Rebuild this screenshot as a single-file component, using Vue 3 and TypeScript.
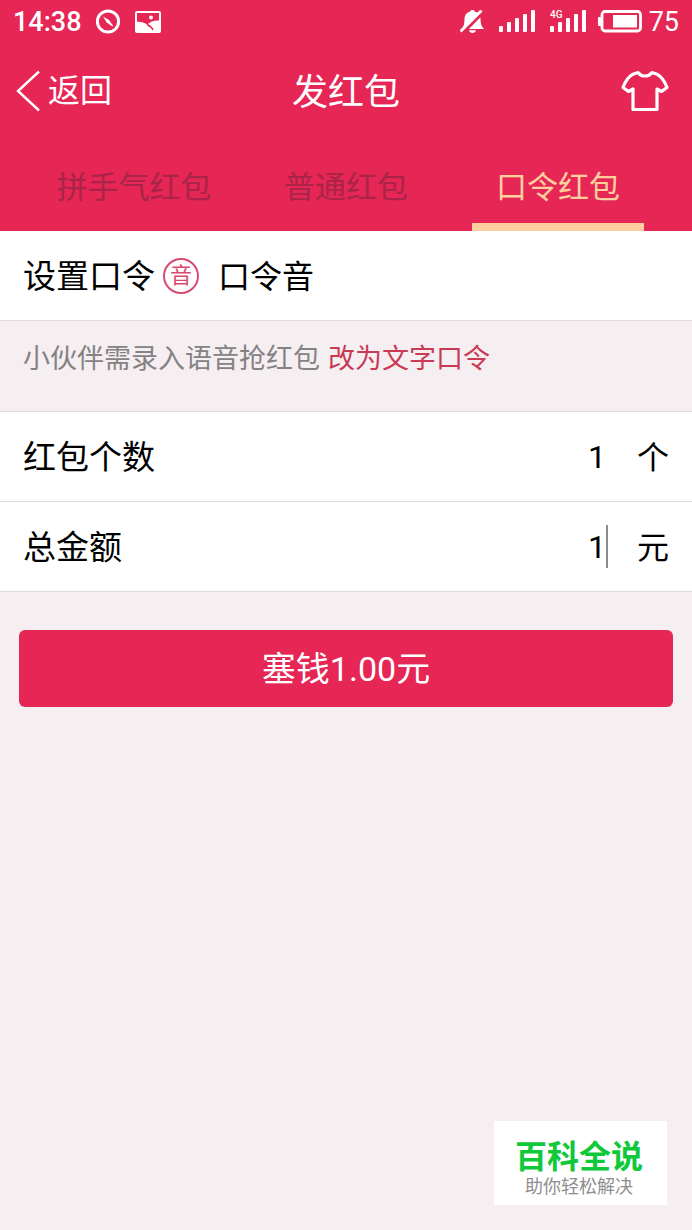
<script setup lang="ts">
import { computed, ref } from 'vue'

interface Tab {
  id: string
  label: string
}

const tabs: Tab[] = [
  { id: 'lucky', label: '拼手气红包' },
  { id: 'normal', label: '普通红包' },
  { id: 'password', label: '口令红包' },
]
const activeTab = ref('password')
const password = ref('口令音')
const count = ref('1')
const amount = ref('1')
const activeField = ref('amount')

const total = computed(() => (Number(amount.value) || 0).toFixed(2))
const signalBars = [6, 10, 14, 18, 22]
</script>

<template>
  <div class="screen">
    <header class="header">
      <div class="status">
        <span class="time">14:38</span>
        <svg class="clock" width="26" height="26" viewBox="0 0 26 26">
          <circle cx="13" cy="12.5" r="10.6" fill="none" stroke="#fff" stroke-width="3" />
          <path d="M8 7.500l6 3.600 4.200 5.700-.8.8-5.700-4z" fill="#fff" />
        </svg>
        <svg class="photo" width="26" height="22" viewBox="0 0 26 22">
          <rect x="1" y="1" width="24" height="20" rx="1" fill="none" stroke="#fff" stroke-width="2" />
          <path d="M1 11c4-.8 7.500 0 11 2.600C15.500 10.500 19 9 25 9.500V21H1z" fill="#fff" />
          <path d="M12 13.500c3 1.500 5 3 6 5.500" fill="none" stroke="#e62655" stroke-width="1.600" />
          <circle cx="16" cy="6.500" r="2" fill="#fff" />
        </svg>
        <span class="spacer"></span>
        <svg class="bell" width="24" height="24" viewBox="0 0 24 24">
          <path d="M12.500 0c1.200 0 1.900.5 2.200 1.400C18.500 2.400 20.500 5 20.500 9c0 4.500.8 7.500 3.500 10H1.500c2.500-2.500 3-5.500 3-10 0-4 2-6.600 5.800-7.600C10.600.5 11.300 0 12.500 0zM9 20.300h7c-.5 1.900-1.700 2.700-3.500 2.700S9.500 22.200 9 20.300z" fill="#fff" />
          <path d="M2 23L23 2" stroke="#e62655" stroke-width="4" />
          <path d="M.5 21.500L21.500 .5" stroke="#fff" stroke-width="2.800" />
        </svg>
        <svg class="signal" width="36" height="24" viewBox="0 0 36 24">
          <rect v-for="(h, i) in signalBars" :key="h" :x="i * 8" :y="22 - h" width="4" :height="h" rx="1" fill="#fff" />
        </svg>
        <svg class="signal" width="36" height="24" viewBox="0 0 36 24">
          <rect v-for="(h, i) in signalBars" :key="h" :x="i * 8" :y="22 - h" width="4" :height="h" rx="1" fill="#fff" />
          <text x="0" y="8" class="network">4G</text>
        </svg>
        <svg class="battery" width="44" height="24" viewBox="0 0 44 24">
          <rect x="4" y="1.500" width="38.500" height="19.500" rx="3" fill="none" stroke="#fff" stroke-width="2.800" />
          <rect x="0" y="7" width="4" height="9" rx="1" fill="#fff" />
          <rect x="15" y="5" width="24" height="12.500" fill="#fff" />
        </svg>
        <span class="level">75</span>
      </div>

      <nav class="nav">
        <button class="back" type="button">
          <svg width="24" height="42" viewBox="0 0 24 42">
            <path d="M23 1.500L2 21l21 19.500" fill="none" stroke="#fff" stroke-width="2.400" />
          </svg>
          <span>返回</span>
        </button>
        <h1 class="title">发红包</h1>
        <button class="skin" type="button" aria-label="装扮">
          <svg width="48" height="42" viewBox="0 0 48 42">
            <path d="M17 2.500L12 4.200Q5.500 8 2 17.500L7.500 21.500l4.500-2.500v20.500h24V19l4.500 2.500 5.500-4Q42.500 8 36 4.200l-5-1.700Q28.500 6 24 6T17 2.500z" fill="none" stroke="#fff" stroke-width="3.200" stroke-linejoin="round" />
          </svg>
        </button>
      </nav>

      <div class="tabs" role="tablist">
        <button
          v-for="tab in tabs"
          :key="tab.id"
          type="button"
          role="tab"
          class="tab"
          :class="{ active: tab.id === activeTab }"
          :aria-selected="tab.id === activeTab"
          @click="activeTab = tab.id"
        >
          {{ tab.label }}
        </button>
      </div>
    </header>

    <form @submit.prevent>
      <div class="row">
        <label for="password">设置口令</label>
        <span class="badge">音</span>
        <input id="password" v-model="password" class="phrase" type="text" />
      </div>

      <p class="hint">小伙伴需录入语音抢红包<a href="#">改为文字口令</a></p>

      <div class="row first">
        <label for="count">红包个数</label>
        <input id="count" v-model="count" class="number" :class="{ editing: activeField === 'count' }" type="text" inputmode="numeric" @focus="activeField = 'count'" />
        <span class="unit">个</span>
      </div>
      <div class="row">
        <label for="amount">总金额</label>
        <input id="amount" v-model="amount" class="number" :class="{ editing: activeField === 'amount' }" type="text" inputmode="decimal" @focus="activeField = 'amount'" />
        <span class="unit">元</span>
      </div>

      <button class="submit" type="submit">塞钱{{ total }}元</button>
    </form>

    <aside class="brand">
      <strong>百科全说</strong>
      <span>助你轻松解决</span>
    </aside>
  </div>
</template>

<style>
body {
  margin: 0;
  background: #f5eff1;
}
</style>

<style scoped>
.screen {
  min-height: 100vh;
  background: #f5eff1;
  color: #000;
  font-family: Roboto, "Noto Sans CJK SC", sans-serif;
  font-size: 32px;
}
button,
input {
  margin: 0;
  padding: 0;
  border: 0;
  background: none;
  color: inherit;
  font: inherit;
  outline: none;
}
svg {
  display: block;
  flex: none;
}
.header {
  background: #e62655;
  color: #fff;
}
.status {
  display: flex;
  align-items: center;
  height: 44px;
  padding: 0 13px;
  font-size: 27px;
  font-weight: 500;
  line-height: 44px;
}
.clock {
  margin-left: 13px;
}
.photo {
  margin-left: 14px;
}
.spacer {
  flex: 1;
}
.signal {
  margin-left: 15px;
}
.network {
  font-size: 10px;
  font-weight: 500;
  fill: #fff;
}
.battery {
  margin: 0 7px 0 12px;
}
.level {
  font-weight: 400;
}
.nav {
  display: grid;
  grid-template-columns: 1fr auto 1fr;
  align-items: center;
  height: 94px;
  padding: 0 23px 0 16px;
}
.back {
  display: flex;
  align-items: center;
  justify-self: start;
  gap: 8px;
  line-height: 40px;
}
.title {
  margin: 0;
  padding: 4px 0 0 7px;
  font-size: 36px;
  font-weight: 400;
  line-height: 48px;
}
.skin {
  justify-self: end;
}
.tabs {
  display: grid;
  grid-template-columns: repeat(3, 1fr);
  padding: 0 28px;
}
.tab {
  position: relative;
  padding-top: 6px;
  color: #a92448;
  font-size: 31px;
  line-height: 87px;
  white-space: nowrap;
}
.tab.active {
  color: #fdcf9f;
}
.tab.active::after {
  content: "";
  position: absolute;
  right: 20px;
  bottom: 0;
  left: 20px;
  height: 8px;
  background: #fdcf9f;
}
.row {
  display: flex;
  align-items: center;
  height: 89px;
  padding: 0 23px;
  border-bottom: 1px solid #dcdcde;
  background: #fff;
}
.row.first {
  border-top: 1px solid #dcdcde;
}
.row label,
.unit,
.phrase {
  padding-bottom: 3px;
}
.row label {
  font-size: 33px;
}
.badge {
  box-sizing: border-box;
  width: 36px;
  height: 36px;
  margin: 0 19px 0 8px;
  border: 2px solid #d94a70;
  border-radius: 50%;
  color: #d94a70;
  font-size: 22px;
  line-height: 32px;
  text-align: center;
}
.phrase {
  flex: 1;
  min-width: 0;
}
.hint {
  height: 84px;
  margin: 0;
  padding: 6px 23px 0;
  color: #858283;
  font-size: 27px;
  line-height: 64px;
}
.hint a {
  margin-left: 8px;
  color: #c93a56;
  text-decoration: none;
}
.number {
  flex: 1;
  min-width: 0;
  height: 43px;
  border-right: 2px solid transparent;
  text-align: right;
}
.number.editing {
  border-right-color: #8c8c8c;
}
.unit {
  margin-left: 29px;
}
.submit {
  display: block;
  width: calc(100% - 38px);
  height: 77px;
  margin: 38px 19px 0;
  padding-top: 2px;
  border-radius: 6px;
  background: #e62655;
  color: #fff;
  font-size: 34px;
  line-height: 75px;
}
.brand {
  position: fixed;
  right: 25px;
  bottom: 25px;
  display: flex;
  flex-direction: column;
  align-items: center;
  box-sizing: border-box;
  padding: 17px 24px 7px 21px;
  background: #fff;
}
.brand strong {
  color: #0fc93a;
  font-size: 32px;
  font-weight: 700;
  line-height: 38px;
}
.brand span {
  color: #8e8e8e;
  font-size: 18px;
  line-height: 22px;
}
</style>
